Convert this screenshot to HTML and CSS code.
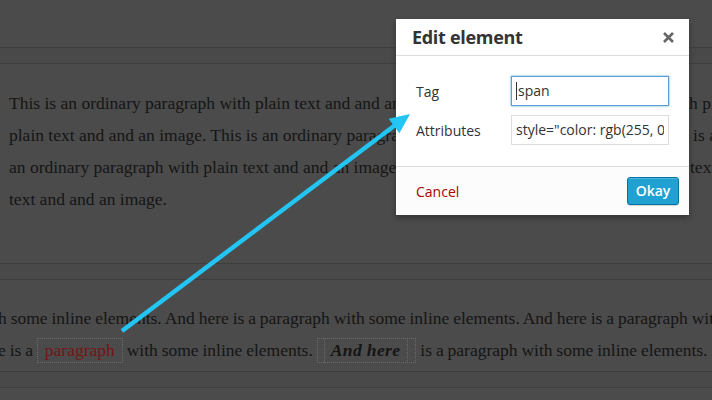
FILE: index.html
```html
<!DOCTYPE html>
<html>
<head>
<meta charset="utf-8">
<link rel="stylesheet" href="styles.css">
</head>
<body>
<div class="page">
  <div class="sep"></div>
  <div class="para top">
    <span class="line">This is an ordinary paragraph with plain text and and an image. This is an ordinary paragraph with plain text</span>
    <span class="line">plain text and and an image. This is an ordinary paragraph with plain text and and an image. This is an</span>
    <span class="line">an ordinary paragraph with plain text and and an image. This is an ordinary paragraph with plain text</span>
    <span class="line">text and and an image.</span>
  </div>
  <div class="sep"></div>
  <div class="para bottom">
    <span class="line shift">h some inline elements. And here is a paragraph with some inline elements. And here is a paragraph with some</span>
    <span class="line shift">e is a <span class="tag red">paragraph</span> with some inline elements. <span class="tag"><span class="tag inner"><strong><em>And here</em></strong></span></span> is a paragraph with some inline elements.</span>
  </div>
  <div class="sep"></div>
</div>

<div class="dialog">
  <div class="dlg-head">
    <span class="dlg-title">Edit element</span>
    <svg class="close" width="11" height="11" viewBox="0 0 11 11"><path d="M1 1 L10 10 M10 1 L1 10" stroke="#666" stroke-width="2.6" fill="none"/></svg>
  </div>
  <div class="dlg-body">
    <div class="row">
      <span class="lbl">Tag</span>
      <div class="field focus"><span class="val"><span class="caret"></span>span</span></div>
    </div>
    <div class="row">
      <span class="lbl">Attributes</span>
      <div class="field"><span class="val">style="color: rgb(255, 0, 0);"</span></div>
    </div>
  </div>
  <div class="dlg-foot">
    <span class="cancel">Cancel</span>
    <span class="okay">Okay</span>
  </div>
</div>

<svg class="arrow" width="712" height="400" viewBox="0 0 712 400">
  <line x1="122" y1="331" x2="396" y2="124.5" stroke="#22c5f3" stroke-width="4.5"/>
  <polygon points="410,114 388.6,118.8 399.4,133.2" fill="#22c5f3"/>
</svg>
</body>
</html>
```
FILE: styles.css
```css
html, body {
  margin: 0;
  padding: 0;
  width: 712px;
  height: 400px;
  overflow: hidden;
  background: #4b4b4b;
}

.page {
  padding-top: 47px;
}

.sep {
  height: 15px;
  border-top: 1px solid #3e3e3e;
  border-bottom: 1px solid #3e3e3e;
  background: #494949;
}

.para {
  font-family: "Liberation Serif", "Times New Roman", serif;
  font-size: 17.5px;
  line-height: 32px;
  color: #151515;
  white-space: nowrap;
}

.line {
  display: block;
}

.top {
  margin: 23px 0 48px;
  padding-left: 9px;
}

.bottom {
  margin: 22px 0 5px;
}

.shift {
  margin-left: -2px;
  word-spacing: -0.5px;
}

.tag {
  border: 1px dotted #6a6a6a;
  padding: 1px 7px 2px 6px;
  word-spacing: 0;
}

.tag .inner {
  padding: 1px 7px 2px 6px;
  letter-spacing: 0.4px;
}

.red {
  color: #761515;
  padding: 1px 7px 2px;
}

.dialog {
  position: absolute;
  left: 396px;
  top: 19px;
  width: 293px;
  background: #fff;
  box-shadow: 0 3px 6px rgba(0, 0, 0, 0.3);
  font-family: "Open Sans", sans-serif;
  color: #333;
}

.dlg-head {
  height: 36px;
  border-bottom: 1px solid #ddd;
  display: flex;
  align-items: center;
  justify-content: space-between;
  padding: 0 15px 0 16px;
}

.dlg-title {
  font-size: 18px;
  font-weight: 700;
  line-height: 36px;
  color: #333;
  letter-spacing: -0.3px;
}

.close {
  display: block;
}

.dlg-body {
  padding: 20px 20px 21px;
  display: flex;
  flex-direction: column;
  gap: 9px;
}

.row {
  display: flex;
  align-items: center;
}

.lbl {
  width: 95px;
  font-size: 14px;
}

.field {
  width: 158px;
  height: 30px;
  box-sizing: border-box;
  border: 1px solid #ddd;
  padding: 0 4px;
  display: flex;
  align-items: center;
  font-size: 14px;
  color: #333;
}

.val {
  flex: 1;
  min-width: 0;
  overflow: hidden;
  white-space: nowrap;
  line-height: 28px;
}

.focus {
  border-color: #5b9dd9;
  box-shadow: 0 0 2px rgba(30, 140, 190, 0.8);
}

.caret {
  display: inline-block;
  width: 1px;
  height: 18px;
  background: #333;
  vertical-align: middle;
  margin: -2px 1px 0 0;
}

.dlg-foot {
  height: 48px;
  border-top: 1px solid #ddd;
  background: #fcfcfc;
  display: flex;
  align-items: center;
  justify-content: space-between;
  padding: 0 10px 0 20px;
}

.cancel {
  color: #a00;
  font-size: 14px;
}

.okay {
  box-sizing: border-box;
  width: 52px;
  height: 28px;
  background: #21a0d2;
  border: 1px solid #0074a2;
  border-radius: 3px;
  color: #fff;
  font-size: 14px;
  font-weight: 600;
  line-height: 26px;
  text-align: center;
  box-shadow: inset 0 1px 0 rgba(120, 200, 230, 0.5), 0 1px 0 rgba(0, 0, 0, 0.15);
}

.arrow {
  position: absolute;
  left: 0;
  top: 0;
  pointer-events: none;
}
```
